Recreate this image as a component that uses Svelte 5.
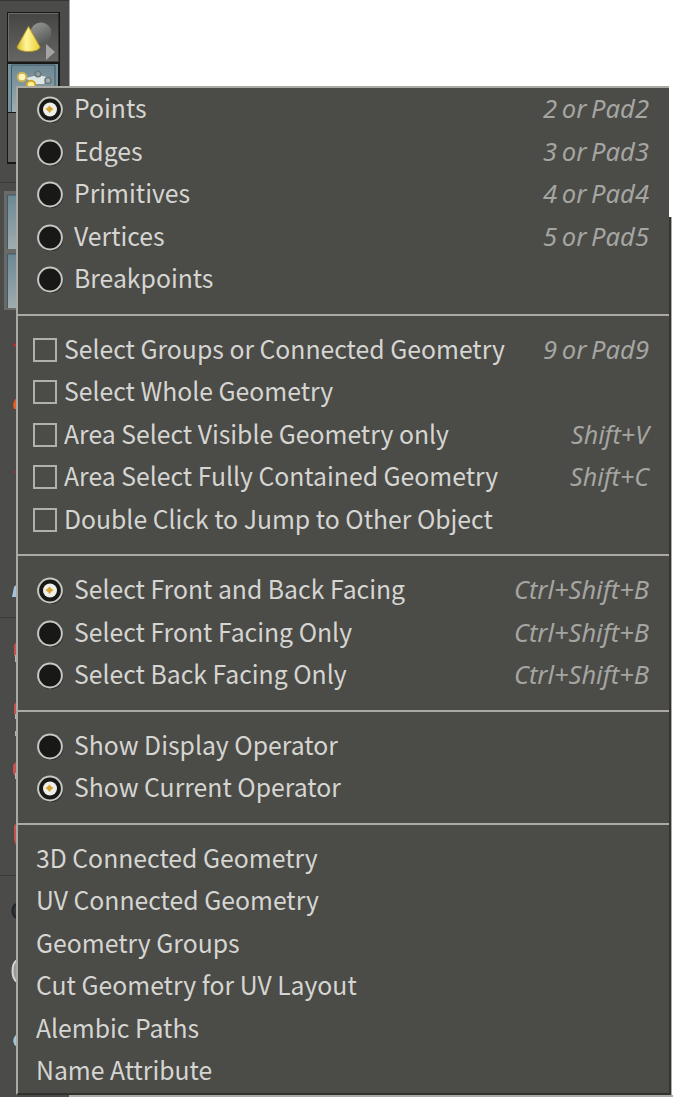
<script>
  const groups = [
    { kind: 'radio', items: [
      { label: 'Points', key: '2 or Pad2', w: 106, on: true },
      { label: 'Edges', key: '3 or Pad3', w: 106 },
      { label: 'Primitives', key: '4 or Pad4', w: 106 },
      { label: 'Vertices', key: '5 or Pad5', w: 106 },
      { label: 'Breakpoints' }
    ] },
    { kind: 'check', items: [
      { label: 'Select Groups or Connected Geometry', key: '9 or Pad9', w: 106 },
      { label: 'Select Whole Geometry' },
      { label: 'Area Select Visible Geometry only', key: 'Shift+V', w: 78 },
      { label: 'Area Select Fully Contained Geometry', key: 'Shift+C', w: 79 },
      { label: 'Double Click to Jump to Other Object' }
    ] },
    { kind: 'radio', items: [
      { label: 'Select Front and Back Facing', key: 'Ctrl+Shift+B', w: 135, on: true },
      { label: 'Select Front Facing Only', key: 'Ctrl+Shift+B', w: 135 },
      { label: 'Select Back Facing Only', key: 'Ctrl+Shift+B', w: 135 }
    ] },
    { kind: 'radio', items: [
      { label: 'Show Display Operator' },
      { label: 'Show Current Operator', on: true }
    ] },
    { kind: 'plain', items: [
      { label: '3D Connected Geometry' },
      { label: 'UV Connected Geometry' },
      { label: 'Geometry Groups' },
      { label: 'Cut Geometry for UV Layout' },
      { label: 'Alembic Paths' },
      { label: 'Name Attribute' }
    ] }
  ];
</script>

<div class="screen">
  <svg class="toolbar" width="70" height="1097" viewBox="0 0 70 1097">
    <defs>
      <linearGradient id="btn" x2="0" y2="1"><stop stop-color="#454543" /><stop offset="1" stop-color="#666664" /></linearGradient>
      <linearGradient id="blue" x2="0" y2="1"><stop stop-color="#6b8794" /><stop offset="1" stop-color="#a0adaf" /></linearGradient>
      <linearGradient id="cone"><stop stop-color="#d8bd28" /><stop offset=".4" stop-color="#fff69a" /><stop offset="1" stop-color="#e8ce35" /></linearGradient>
      <linearGradient id="ball" x2=".6" y2="1"><stop stop-color="#9a9c9a" /><stop offset="1" stop-color="#5a5c5a" /></linearGradient>
    </defs>
    <rect width="69.500" height="1097" fill="#4b4b49" />
    <path d="M0 .5H69" stroke="#353533" />
    <rect x="7" y="12" width="53" height="152" fill="#181817" />
    <rect x="8" y="13" width="50.500" height="48.500" fill="url(#btn)" />
    <path d="M8.500 61V13.500H58" fill="none" stroke="#6d6d6a" />
    <circle cx="41" cy="33" r="10.500" fill="url(#ball)" />
    <path d="M28.500 26.500L40 47C39 53 18 53 17 47Z" fill="url(#cone)" stroke="#b99c26" />
    <path d="M46 44L55 52L46 60Z" fill="#a4a4a2" />
    <rect x="8" y="64" width="50" height="48" fill="#75929f" />
    <rect x="12" y="65" width="44" height="47" fill="url(#blue)" />
    <path d="M11.500 112V65H55V90" fill="none" stroke="#435b65" />
    <rect x="8" y="113" width="51" height="49" fill="#626260" />
    <path d="M26 78L38 75L47 77L44 84L33 84Z" fill="#dce4e4" />
    <circle cx="22" cy="77" r="4.300" fill="#fff4c0" stroke="#ceb351" stroke-width="2" />
    <circle cx="31" cy="85" r="4.300" fill="#fff094" stroke="#cda52e" stroke-width="2" />
    <circle cx="38" cy="74" r="2.800" fill="#93a0a2" stroke="#69767a" stroke-width="1.500" />
    <circle cx="48" cy="80.500" r="3" fill="#a4afb0" stroke="#69767a" stroke-width="1.500" />
    <path d="M0 182.500H18M0 617.500H18M0 875.500H18" stroke="#3b3b39" />
    <rect x="4" y="191" width="14" height="119" fill="#6a6a68" />
    <rect x="7" y="195" width="11" height="54" fill="url(#blue)" />
    <rect x="7" y="254" width="11" height="54" fill="url(#blue)" />
    <path d="M7.500 249V195H18M7.500 308V254H18" fill="none" stroke="#435863" />
    <path d="M17 342L13 345L17 348ZM17 470L14 472L17 474Z" fill="#bd3026" />
    <path d="M17 398C14 400 12 404 14 409H17Z" fill="#e75c20" />
    <path d="M17 584L14 587L12 597H17Z" fill="#a5c2d8" />
    <path d="M17 641L14 645V655L17 661ZM17 701L14 705V713L17 719ZM17 761L13 765V773L17 779ZM17 822L14 826V840L17 848Z" fill="#c4504f" />
    <path d="M15 655H17V662H15ZM15 714H17V719H15ZM15 731H17V736H15ZM15 773H17V779H15Z" fill="#b2b6b1" />
    <path d="M17 904C11 906 11 915 17 918" fill="#343739" stroke="#202426" stroke-width="2" />
    <path d="M17 960C11 964 11 978 17 982" fill="#999a97" stroke="#d3d4cf" stroke-width="2" />
    <path d="M17 1034C12 1038 12 1044 17 1047" fill="#a3c6d6" />
  </svg>

  <div class="menu">
    {#each groups as group}
      <div class="group {group.kind}">
        {#each group.items as item}
          <div class="row">
            {#if group.kind === 'radio'}
              <svg class="radio-icon" width="28" height="28" viewBox="0 0 28 28">
                <circle cx="15" cy="15.700" r="12.300" fill="#30302e" />
                <circle cx="14" cy="14.500" r="11.900" fill="#181817" stroke="#c6c6c2" stroke-width="2" />
                {#if item.on}
                  <circle cx="14" cy="14.500" r="7" fill="#eeeeea" />
                  <path d="M13.500 10.500L15.300 12.500L17.500 14L15.300 15.800L13.500 18L11.700 15.800L9.500 14L11.700 12.500Z" fill="#d4a32f" />
                {/if}
              </svg>
            {:else if group.kind === 'check'}
              <span class="box"></span>
            {/if}
            <span class="label">{item.label}</span>
            {#if item.key}
              <svg class="key" width={item.w} height="42" viewBox="0 0 {item.w} 42">
                <text x="0" y="30" textLength={item.w} lengthAdjust="spacingAndGlyphs">{item.key}</text>
              </svg>
            {/if}
          </div>
        {/each}
      </div>
    {/each}
  </div>
  <div class="edge"></div>
  <div class="base"></div>
</div>

<style>
  :global(body) { margin: 0; background: #fff; overflow: hidden; }
  .screen { position: relative; width: 673px; height: 1097px; overflow: hidden; background: #fff; }
  .toolbar { display: block; }
  .menu {
    position: absolute; left: 16px; top: 86px; width: 653px; height: 1009px;
    box-sizing: border-box; border: 2px solid #aaa9a4; border-top-width: 2px;
    border-right: 0; border-bottom: 2px solid #30302e;
    background: #4b4b48; color: #d5d5d1;
    font: 25.500px/42.500px "Noto Sans CJK SC", "Noto Sans", sans-serif;
  }
  .edge {
    position: absolute; left: 669px; top: 217px; width: 2px; height: 878px;
    background: #343432; border-right: 1px solid #b5aaa5;
  }
  .base { position: absolute; left: 69px; top: 1095px; width: 604px; height: 2px; background: #aaa9a4; }
  .group + .group { border-top: 2px solid #aaa9a4; margin-top: 13px; padding-top: 13px; }
  .row { display: flex; align-items: center; height: 42.500px; padding-right: 20px; }
  .menu .row { padding-right: 20px; }
  .radio .row { padding-left: 18px; }
  .check .row { padding-left: 15px; }
  .plain .row { padding-left: 17.500px; }
  .radio-icon { flex: none; margin-right: 10px; }
  .box { flex: none; box-sizing: border-box; width: 24px; height: 24px; border: 2px solid #b0b0ac; margin-right: 6.500px; }
  .label { white-space: nowrap; transform: translateY(-2px) scaleX(.971); transform-origin: 0 50%; width: max-content; margin-right: -20px; }
  .key { flex: none; margin-left: auto; overflow: visible; }
  .key text { fill: #a5a5a1; font: italic 26px "Noto Sans", sans-serif; word-spacing: -2px; }
</style>
